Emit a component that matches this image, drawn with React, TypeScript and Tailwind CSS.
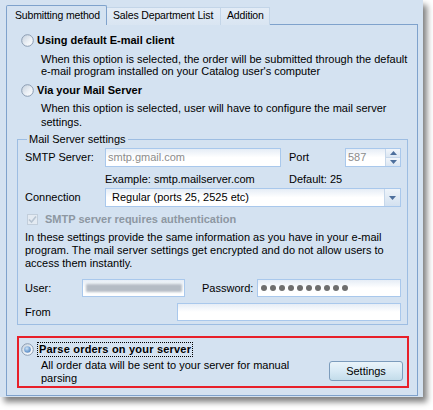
import React from "react";

function Radio({ checked, id }: { checked?: boolean; id: string }) {
  return (
    <svg width="13" height="13" viewBox="0 0 13 13" className="shrink-0">
      <defs>
        <linearGradient id={`rg-${id}`} x1="0" y1="0" x2="1" y2="1">
          <stop offset="0" stopColor="#c3cfdc" />
          <stop offset="0.6" stopColor="#eef2f7" />
          <stop offset="1" stopColor="#ffffff" />
        </linearGradient>
        <radialGradient id={`rd-${id}`} cx="0.4" cy="0.35" r="0.7">
          <stop offset="0" stopColor="#cfe3f7" />
          <stop offset="0.6" stopColor="#7aa6d6" />
          <stop offset="1" stopColor="#5b88c0" />
        </radialGradient>
      </defs>
      <circle cx="6.5" cy="6.5" r="5.8" fill={`url(#rg-${id})`} stroke="#8b9cb2" strokeWidth="1" />
      {checked && <circle cx="6.5" cy="6.5" r="3.3" fill={`url(#rd-${id})`} />}
    </svg>
  );
}

function Input({ className = "", children }: { className?: string; children?: React.ReactNode }) {
  return (
    <div
      className={`h-full border border-[#a9c8ec] bg-gradient-to-b from-[#e6edf6] via-white to-white flex items-center ${className}`}
    >
      {children}
    </div>
  );
}

function Arrow({ up }: { up?: boolean }) {
  return (
    <svg width="7" height="4" viewBox="0 0 7 4">
      <path d={up ? "M0 4 L3.5 0 L7 4 Z" : "M0 0 L7 0 L3.5 4 Z"} fill="#4d6f9c" />
    </svg>
  );
}

export default function App() {
  return (
    <div
      className="w-[433px] h-[410px] bg-white overflow-hidden text-[11px] text-black"
      style={{ fontFamily: '"Liberation Sans", Arial, sans-serif' }}
    >
      <div className="w-[423px] h-[397px] bg-[#d4e2f1] shadow-[4px_5px_6px_rgba(0,0,0,0.5)] pt-[5px]">
        {/* tabs */}
        <div className="flex items-end h-[20px] pl-[6px] text-[10.5px] tracking-[-0.15px]">
          <div className="relative z-10 h-[20px] w-[101px] border-t border-l border-r border-[#7fa2cc] rounded-t-[2px] bg-[#d4e2f1] pl-[8px] pt-[3px] leading-[13px] whitespace-nowrap">
            Submitting method
          </div>
          <div className="h-[18px] w-[114px] border-t border-r border-[#c3d5e8] bg-gradient-to-b from-[#e3ecf6] to-[#d9e5f2] pl-[6px] pt-[1px] leading-[13px] whitespace-nowrap">
            Sales Department List
          </div>
          <div className="h-[18px] w-[49px] border-t border-r border-[#c3d5e8] bg-gradient-to-b from-[#e3ecf6] to-[#d9e5f2] pl-[6px] pt-[1px] leading-[13px] whitespace-nowrap">
            Addition
          </div>
        </div>

        {/* panel */}
        <div className="mt-[-1px] ml-[6px] w-[412px] h-[372px] border border-[#7fa2cc] overflow-hidden">
          {/* option 1 */}
          <div className="mt-[7px] h-[16px] flex items-center pl-[14px] gap-[3px]">
            <Radio id="a" />
            <span className="font-bold leading-[16px]">Using default E-mail client</span>
          </div>
          <div className="mt-[5px] pl-[34px] leading-[12px] whitespace-nowrap">
            When this option is selected, the order will be submitted through the default
            <br />
            e-mail program installed on your Catalog user's computer
          </div>

          {/* option 2 */}
          <div className="mt-[5px] h-[16px] flex items-center pl-[14px] gap-[3px]">
            <Radio id="b" />
            <span className="font-bold leading-[16px]">Via your Mail Server</span>
          </div>
          <div className="mt-[3px] pl-[34px] leading-[14px] whitespace-nowrap">
            When this option is selected, user will have to configure the mail server
            <br />
            settings.
          </div>

          {/* group */}
          <fieldset className="mt-[4px] ml-[10px] w-[391px] border border-[#9dbde2] pl-[7px] pb-[3px]">
            <legend className="ml-[2px] px-[2px] leading-[13px]">Mail Server settings</legend>
            <div className="mt-[2px] h-[19px] flex items-center">
              <span className="w-[80px]">SMTP Server:</span>
              <Input className="w-[176px] pl-[2px] text-[#8c8c8c]">smtp.gmail.com</Input>
              <span className="ml-[8px] w-[56px]">Port</span>
              <Input className="w-[56px] pl-[2px] text-[#8c8c8c] justify-between">
                <span>587</span>
                <div className="h-full w-[15px] flex flex-col border-l border-[#c6d7ea]">
                  <div className="flex-1 flex items-center justify-center bg-gradient-to-b from-[#f2f6fb] to-[#dbe6f2] border-b border-[#c6d7ea]">
                    <Arrow up />
                  </div>
                  <div className="flex-1 flex items-center justify-center bg-gradient-to-b from-[#f2f6fb] to-[#dbe6f2]">
                    <Arrow />
                  </div>
                </div>
              </Input>
            </div>
            <div className="mt-[6px] h-[12px] flex items-center leading-[12px] whitespace-nowrap">
              <span className="ml-[80px] w-[184px]">Example: smtp.mailserver.com</span>
              <span>Default: 25</span>
            </div>
            <div className="mt-[3px] h-[19px] flex items-center">
              <span className="w-[80px]">Connection</span>
              <Input className="w-[296px] pl-[6px] justify-between">
                <span>Regular (ports 25, 2525 etc)</span>
                <div className="h-full w-[16px] flex items-center justify-center bg-gradient-to-b from-[#eef4fa] to-[#d3e1f0] border-l border-[#c6d7ea]">
                  <Arrow />
                </div>
              </Input>
            </div>
            <div className="mt-[5px] h-[14px] flex items-center">
              <div className="ml-[2px] w-[11px] h-[11px] border border-[#c2cedb] bg-[#e3eaf2] flex items-center justify-center">
                <svg width="9" height="9" viewBox="0 0 9 9">
                  <path d="M1 4.5 L3.5 7 L8 1.5" stroke="#b6c3d1" strokeWidth="1.6" fill="none" />
                </svg>
              </div>
              <span className="ml-[7px] font-bold text-[#8d97a2] leading-[14px]">SMTP server requires authentication</span>
            </div>
            <div className="mt-[5px] leading-[13px] whitespace-nowrap">
              In these settings provide the same information as you have in your e-mail
              <br />
              program. The mail server settings get encrypted and do not allow users to
              <br />
              access them instantly.
            </div>
            <div className="mt-[9px] h-[18px] flex items-center">
              <span className="w-[57px]">User:</span>
              <Input className="w-[103px] pl-[3px]">
                <div className="h-[8px] w-[96px] bg-[#b5bcc5] blur-[1px] rounded-[1px]" />
              </Input>
              <span className="ml-[17px] w-[55px]">Password:</span>
              <Input className="w-[144px] pl-[3px] gap-[3px]">
                {Array.from({ length: 10 }).map((_, i) => (
                  <span key={i} className="w-[6px] h-[6px] rounded-full bg-[#6e6e6e]" />
                ))}
              </Input>
            </div>
            <div className="mt-[6px] h-[18px] flex items-center">
              <span className="w-[152px]">From</span>
              <Input className="w-[224px]" />
            </div>
          </fieldset>

          {/* highlighted option */}
          <div className="mt-[11px] ml-[10px] w-[392px] h-[52px] border-2 border-[#e8202a]">
            <div className="mt-[4px] h-[15px] flex items-center pl-[2px] gap-[3px]">
              <Radio id="c" checked />
              <span className="font-bold leading-[13px] border border-dotted border-black px-[1px] tracking-[0.2px]">
                Parse orders on your server
              </span>
            </div>
            <div className="flex">
              <div className="pl-[22px] pt-[2px] leading-[13px] whitespace-nowrap">
                All order data will be sent to your server for manual
                <br />
                parsing
              </div>
              <div className="ml-auto mr-[4px] mt-[4px] w-[74px] h-[20px] rounded-[3px] border border-[#7c9cbc] bg-gradient-to-b from-[#eaf4fa] via-[#d8eaf5] to-[#c3dcea] flex items-center justify-center">
                Settings
              </div>
            </div>
          </div>
        </div>
      </div>
    </div>
  );
}
